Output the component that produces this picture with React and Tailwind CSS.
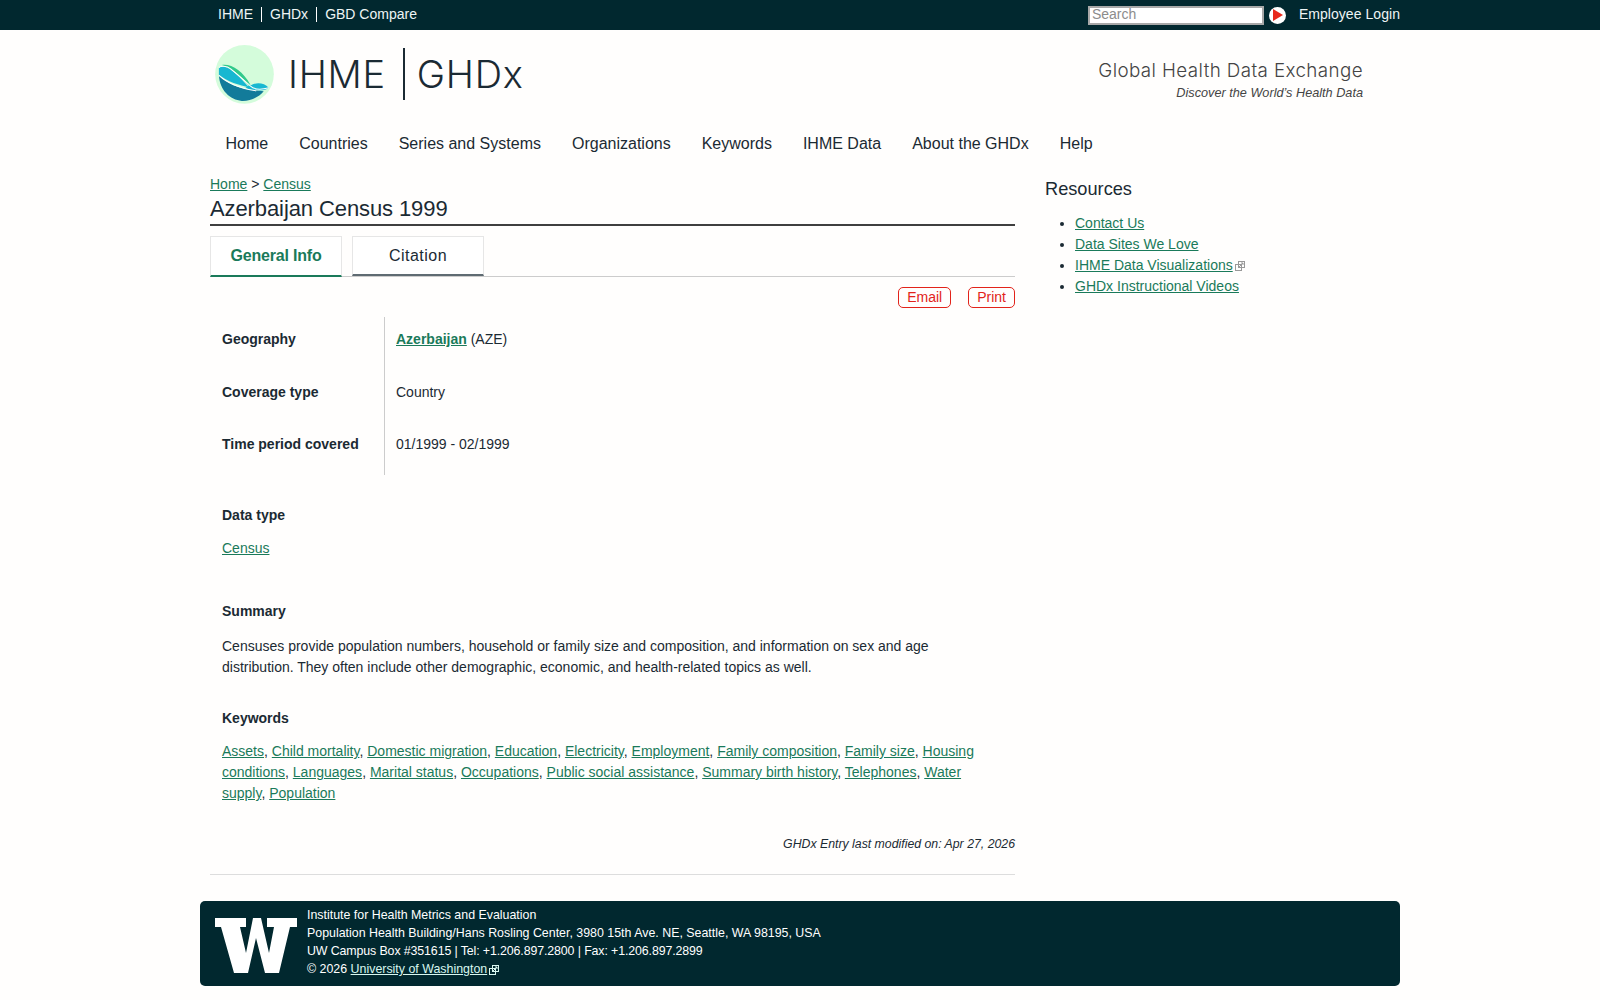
import React from 'react';

const ExternalIcon = ({ className }) => (
    <svg viewBox="0 0 10 10" className={className} fill="none" stroke="currentColor" strokeWidth="1">
        <rect x="0.5" y="3.5" width="6" height="6" />
        <rect x="3.5" y="0.5" width="6" height="6" fill="none" />
        <path d="M4 6 L8 2 M6 2 H8 V4" />
    </svg>
);

const IhmeLogo = () => (
    <svg viewBox="46 45 174 175" className="w-[59px] h-[59px] shrink-0">
        <circle cx="133" cy="132" r="87" fill="#d4fcdb" />
        <path d="M57 135 C72 150 100 170 140 176 C160 180 175 180 190 182 C175 200 150 212 125 211 C90 208 60 180 57 135 Z" fill="#127b9a" />
        <path d="M57 112 C65 106 78 108 90 116 C110 130 128 150 146 170 C120 166 80 152 57 133 Z" fill="#18b7d1" />
        <path d="M66 104 C95 100 128 122 150 162 L146 166 C128 144 108 120 66 104 Z" fill="#31c98b" />
        <path d="M150 166 C165 155 190 155 205 172 C195 180 180 182 170 178 C160 176 155 172 150 166 Z" fill="#18b7d1" />
        <path d="M136 172 L150 163 L168 180 C158 180 146 178 136 172 Z" fill="#18b7d1" />
        <path d="M57 112 C62 106 80 106 92 116 C112 132 132 150 150 166 C160 176 175 180 205 172 M57 135 C75 152 110 172 168 181" fill="none" stroke="#ffffff" strokeWidth="3" />
    </svg>
);

const UwMark = () => (
    <svg viewBox="0 0 82 56" className="w-[82px] h-[56px] shrink-0 mt-[4px]" fill="#ffffff">
        <path d="M0 0 H31 V9 H25 L31 35 L38 0 H46 L54 35 L59 9 H52 V0 H82 V9 H75 L64 55 H50 L41 20 L33 55 H19 L6 9 H0 Z" />
    </svg>
);

const navItems = ['Home', 'Countries', 'Series and Systems', 'Organizations', 'Keywords', 'IHME Data', 'About the GHDx', 'Help'];

const keywordLinks = [
    'Assets', 'Child mortality', 'Domestic migration', 'Education', 'Electricity', 'Employment', 'Family composition',
    'Family size', 'Housing conditions', 'Languages', 'Marital status', 'Occupations', 'Public social assistance',
    'Summary birth history', 'Telephones', 'Water supply', 'Population',
];

const linkClass = 'text-[#1a7a5a] underline';

export default function App() {
    return (
        <div className="min-h-[1000px] bg-[#fffefd] text-[#1b2a33] font-['Liberation_Sans',Arial,sans-serif] text-[14px]">
            <div className="h-[30px] bg-[#01282f] text-[#eef5f5]">
                <div className="w-[1200px] mx-auto h-full flex items-center justify-between">
                    <div className="flex items-center pl-[18px] pb-[1px] leading-[15px]">
                        <span className="pr-2">IHME</span>
                        <span className="px-2 border-l border-white">GHDx</span>
                        <span className="pl-2 border-l border-white">GBD Compare</span>
                    </div>
                    <div className="flex items-center">
                        <input placeholder="Search" className="w-[176px] h-[19px] pl-[2px] pb-[2px] bg-white border-2 border-[#a8a8a8] text-[14px] leading-none placeholder:text-[#8c8c8c]" />
                        <span className="ml-[5px] w-[17px] h-[17px] rounded-full bg-white flex items-center justify-center">
                            <svg viewBox="0 0 10 12" className="w-[10px] h-[12px] ml-[2px]"><path d="M0 0 L10 6 L0 12 Z" fill="#e8291c" /></svg>
                        </span>
                        <span className="ml-[13px] pb-[1px] tracking-[0.05px]">Employee Login</span>
                    </div>
                </div>
            </div>

            <div className="w-[1200px] mx-auto">
                <div className="h-[88px] flex items-center justify-between pl-[15px] pr-[37px]">
                    <div className="flex items-center">
                        <IhmeLogo />
                        <span className="ml-[14px] text-[38px] leading-none font-light tracking-[0.7px] font-['Inter',sans-serif]">IHME</span>
                        <span className="ml-[17px] w-[2px] h-[52px] bg-[#1b2a33]"></span>
                        <span className="ml-[12px] text-[38px] leading-none font-light tracking-[0.8px] font-['Inter',sans-serif]">GHDx</span>
                    </div>
                    <div className="text-right pt-[13px]">
                        <div className="text-[18.8px] leading-[24px] font-light tracking-[0.4px] text-[#444] font-['Inter',sans-serif]">Global Health Data Exchange</div>
                        <div className="mt-[1px] text-[12.7px] leading-[18px] italic text-[#444]">Discover the World’s Health Data</div>
                    </div>
                </div>

                <div className="h-[50px] pt-[1px] flex items-center pl-[10px] text-[16px]">
                    {navItems.map((item) => (
                        <span key={item} className="px-[15.5px]">{item}</span>
                    ))}
                </div>

                <div className="flex pl-[10px]">
                    <div className="w-[805px]">
                        <div className="mt-[6px] leading-[20px]">
                            <span className={linkClass}>Home</span> &gt; <span className={linkClass}>Census</span>
                        </div>
                        <h1 className="h-[30px] text-[22px] leading-[30px] tracking-[-0.1px] border-b-2 border-[#3f3f3f] box-content">Azerbaijan Census 1999</h1>

                        <div className="mt-[10px] h-[41px] flex gap-[10px] border-b border-[#cccccc] text-[16px]">
                            <div className="w-[132px] h-[41px] pb-[1px] flex items-center justify-center bg-white border border-[#e6e6e6] border-b-2 border-b-[#1a7a5a] font-bold text-[#1a7a5a] tracking-[-0.2px]">General Info</div>
                            <div className="w-[132px] h-[40px] flex items-center justify-center bg-white border border-[#e6e6e6] border-b-2 border-b-[#5f6b72] tracking-[0.5px]">Citation</div>
                        </div>

                        <div className="mt-[10px] flex justify-end gap-[17px] text-[#e2231a]">
                            <span className="h-[21px] px-2 flex items-center border border-[#e2231a] rounded-[5px]">Email</span>
                            <span className="h-[21px] px-2 flex items-center border border-[#e2231a] rounded-[5px]">Print</span>
                        </div>

                        <div className="mt-[9px] flex">
                            <div className="w-[175px] h-[158px] pl-3 border-r border-[#cccccc] font-bold">
                                <div className="h-[53px] pt-[12px] leading-[21px]">Geography</div>
                                <div className="h-[52px] pt-[12px] leading-[21px]">Coverage type</div>
                                <div className="h-[53px] pt-[12px] leading-[21px]">Time period covered</div>
                            </div>
                            <div className="pl-[11px]">
                                <div className="h-[53px] pt-[12px] leading-[21px]"><span className={`${linkClass} font-bold`}>Azerbaijan</span> (AZE)</div>
                                <div className="h-[52px] pt-[12px] leading-[21px]">Country</div>
                                <div className="h-[53px] pt-[12px] leading-[21px]">01/1999 - 02/1999</div>
                            </div>
                        </div>

                        <div className="px-3">
                            <div className="mt-[30px] font-bold leading-[21px]">Data type</div>
                            <div className="mt-[12px] leading-[21px]"><span className={linkClass}>Census</span></div>

                            <div className="mt-[42px] font-bold leading-[21px]">Summary</div>
                            <p className="mt-[14px] leading-[21px] w-[745px]">
                                Censuses provide population numbers, household or family size and composition, and information on sex and age distribution. They often include other demographic, economic, and health-related topics as well.
                            </p>

                            <div className="mt-[30px] font-bold leading-[21px]">Keywords</div>
                            <p className="mt-[12px] leading-[21px] w-[755px]">
                                {keywordLinks.map((word, i) => (
                                    <React.Fragment key={word}>
                                        <span className={linkClass}>{word}</span>
                                        {i < keywordLinks.length - 1 ? ', ' : ''}
                                    </React.Fragment>
                                ))}
                            </p>
                        </div>

                        <div className="mt-[30px] text-right text-[12.3px] italic leading-[21px]">GHDx Entry last modified on: Apr 27, 2026</div>
                        <div className="mt-[19px] h-px bg-[#dddddd]"></div>
                    </div>

                    <div className="ml-[30px] flex-1">
                        <h2 className="mt-[8px] text-[18.2px] leading-[26px]">Resources</h2>
                        <ul className="mt-[11px] pl-[30px] list-disc leading-[21px]">
                            <li><span className={linkClass}>Contact Us</span></li>
                            <li><span className={linkClass}>Data Sites We Love</span></li>
                            <li>
                                <span className={linkClass}>IHME Data Visualizations</span>
                                <ExternalIcon className="inline-block w-[10px] h-[10px] ml-[2px] text-[#999]" />
                            </li>
                            <li><span className={linkClass}>GHDx Instructional Videos</span></li>
                        </ul>
                    </div>
                </div>

                <div className="mt-[26px] h-[85px] bg-[#01282f] rounded-[5px] flex items-center pl-[15px] text-white text-[12.4px] leading-[18px]">
                    <UwMark />
                    <div className="ml-[10px] -mt-[3px]">
                        <div>Institute for Health Metrics and Evaluation</div>
                        <div>Population Health Building/Hans Rosling Center, 3980 15th Ave. NE, Seattle, WA 98195, USA</div>
                        <div className="tracking-[-0.12px]">UW Campus Box #351615 | Tel: +1.206.897.2800 | Fax: +1.206.897.2899</div>
                        <div>
                            © 2026 <span className="underline text-[#d8f7f0]">University of Washington</span>
                            <ExternalIcon className="inline-block w-[10px] h-[10px] ml-[2px] text-[#d8f7f0]" />
                        </div>
                    </div>
                </div>
            </div>
        </div>
    );
}
